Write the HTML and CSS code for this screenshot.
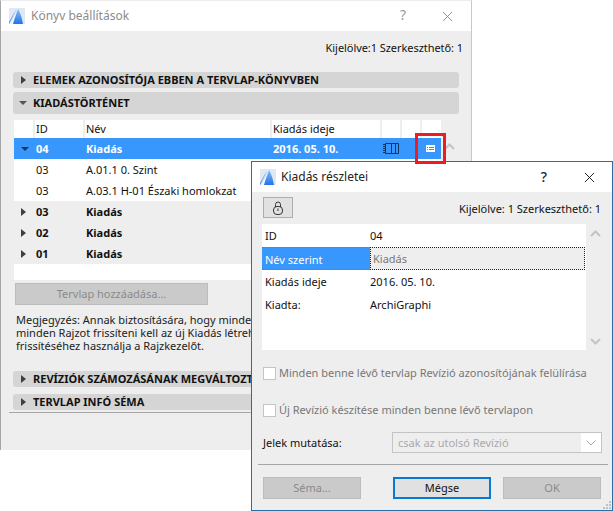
FILE: index.html
```html
<!DOCTYPE html>
<html lang="hu">
<head>
<meta charset="utf-8">
<title>Könyv beállítások</title>
<link rel="stylesheet" href="styles.css">
</head>
<body>
<section class="win back">
  <header class="titlebar back-title">
    <svg class="logo" viewBox="0 0 16 16"><defs><linearGradient id="arch" x1="0" y1="0" x2="0" y2="1"><stop offset="0" stop-color="#8fbcf2"/><stop offset="1" stop-color="#1f74ee"/></linearGradient></defs><rect width="16" height="16" fill="#dfe8f3"/><path d="M0 16C3 13 5 7 9 1c3 5 4 10 5 15z" fill="url(#arch)"/><path d="M0 16C3 13 5 7 9 1C7 6 5 12 4 16z" fill="#f4f8fd"/><path d="M0 14C2 11 4 6 7 2L6 4C4 8 2 12 0 16z" fill="#4c8ad8"/></svg>
    <span class="title-text">Könyv beállítások</span>
    <span class="help">?</span>
    <svg class="close" viewBox="0 0 12 12"><path d="M1 1l10 10M11 1L1 11" stroke="currentColor" fill="none"/></svg>
  </header>
  <div class="back-body">
    <p class="count back-count">Kijelölve:1 Szerkeszthető: 1</p>
    <div class="bar bar-first"><i class="tri-r"></i>ELEMEK AZONOSÍTÓJA EBBEN A TERVLAP-KÖNYVBEN</div>
    <div class="bar bar-open"><i class="tri-d"></i>KIADÁSTÖRTÉNET</div>
    <div class="table">
      <div class="row head"><span></span><span>ID</span><span>Név</span><span>Kiadás ideje</span><span></span><span></span><span></span></div>
      <div class="row sel bold"><span class="arrow"><i class="tri-d dark"></i></span><span>04</span><span>Kiadás</span><span>2016. 05. 10.</span>
        <span class="cell-icon"><svg class="book" width="16" height="11" viewBox="0 0 16 11"><path d="M2.500 .5h13v10h-13zM8.500 .5v10M12.500 .5v10M0 1.500h2.500M0 3.500h2.500M0 5.500h2.500M0 7.500h2.500M0 9.500h2.500" fill="none" stroke="#12365e"/></svg></span><span></span>
        <span class="cell-icon"><svg width="9" height="7" viewBox="0 0 9 7"><rect width="9" height="7" fill="#fff"/><path d="M1 2.500h1M3 2.500h5M1 4.500h1M3 4.500h5" stroke="#3a8ef0"/></svg></span></div>
      <div class="row"><span></span><span>03</span><span>A.01.1 0. Szint</span></div>
      <div class="row"><span></span><span>03</span><span>A.03.1 H-01 Északi homlokzat</span></div>
      <div class="row grey bold"><span class="arrow"><i class="tri-r"></i></span><span>03</span><span>Kiadás</span></div>
      <div class="row grey bold"><span class="arrow"><i class="tri-r"></i></span><span>02</span><span>Kiadás</span></div>
      <div class="row grey bold"><span class="arrow"><i class="tri-r"></i></span><span>01</span><span>Kiadás</span></div>
      <div class="table-rest"></div>
      <svg class="chev chev-table" viewBox="0 0 11 7"><path d="M1 6l4.500-4.500L10 6" fill="none" stroke="#c4c4c4" stroke-width="2"/></svg>
    </div>
    <button class="btn add" type="button">Tervlap hozzáadása...</button>
    <p class="note">Megjegyzés: Annak biztosítására, hogy minden<br>minden Rajzot frissíteni kell az új Kiadás létreh<br>frissítéséhez használja a Rajzkezelőt.</p>
    <div class="bar bar-rev"><i class="tri-r"></i>REVÍZIÓK SZÁMOZÁSÁNAK MEGVÁLTOZTATÁSA</div>
    <div class="bar bar-info"><i class="tri-r"></i>TERVLAP INFÓ SÉMA</div>
    <hr class="back-rule">
  </div>
</section>

<section class="win front">
  <header class="titlebar front-title">
    <svg class="logo" viewBox="0 0 16 16"><rect width="16" height="16" fill="#dfe8f3"/><path d="M0 16C3 13 5 7 9 1c3 5 4 10 5 15z" fill="url(#arch)"/><path d="M0 16C3 13 5 7 9 1C7 6 5 12 4 16z" fill="#f4f8fd"/><path d="M0 14C2 11 4 6 7 2L6 4C4 8 2 12 0 16z" fill="#4c8ad8"/></svg>
    <span class="title-text">Kiadás részletei</span>
    <span class="help">?</span>
    <svg class="close" viewBox="0 0 12 12"><path d="M1 1l10 10M11 1L1 11" stroke="currentColor" fill="none"/></svg>
  </header>
  <div class="front-body">
    <div class="toolrow">
      <button class="lock" type="button"><svg width="10" height="14" viewBox="0 0 10 14"><path d="M2.500 6V3.500a2.500 2.500 0 0 1 5 0V6" fill="none" stroke="#333"/><rect x=".5" y="5.500" width="9" height="8" rx="3.500" fill="none" stroke="#333"/><path d="M5 7.500v2.500" stroke="#333"/></svg></button>
      <span class="count">Kijelölve: 1 Szerkeszthető: 1</span>
    </div>
    <div class="props">
      <div class="prop"><span>ID</span><span>04</span></div>
      <div class="prop active"><span class="prop-key">Név szerint</span><span class="prop-val">Kiadás</span></div>
      <div class="prop"><span>Kiadás ideje</span><span>2016. 05. 10.</span></div>
      <div class="prop"><span>Kiadta:</span><span>ArchiGraphi</span></div>
      <svg class="chev chev-up" viewBox="0 0 11 7"><path d="M1 6l4.500-4.500L10 6" fill="none" stroke="#c4c4c4" stroke-width="2"/></svg>
      <svg class="chev chev-down" viewBox="0 0 11 7"><path d="M1 1l4.500 4.500L10 1" fill="none" stroke="#c4c4c4" stroke-width="2"/></svg>
    </div>
    <label class="check check-one"><i class="box"></i>Minden benne lévő tervlap Revízió azonosítójának felülírása</label>
    <label class="check check-two"><i class="box"></i>Új Revízió készítése minden benne lévő tervlapon</label>
    <div class="markers">
      <span class="markers-label">Jelek mutatása:</span>
      <div class="select"><span class="select-text">csak az utolsó Revízió</span><svg width="10" height="6" viewBox="0 0 10 6"><path d="M.5 .5l4.500 4.500 4.500-4.500" fill="none" stroke="#a8a8a8"/></svg></div>
    </div>
    <hr class="front-rule">
    <div class="actions">
      <button class="btn act" type="button">Séma...</button>
      <button class="btn act primary" type="button">Mégse</button>
      <button class="btn act" type="button">OK</button>
    </div>
    <svg class="grip" width="10" height="10" viewBox="0 0 10 10"><path d="M7 1h2v2H7zM4 4h2v2H4zM7 4h2v2H7zM1 7h2v2H1zM4 7h2v2H4zM7 7h2v2H7z" fill="#c0c0c0"/></svg>
  </div>
</section>

<div class="callout"></div>
</body>
</html>
```
FILE: styles.css
```css
* { box-sizing: border-box; }
html, body { margin: 0; height: 100%; }
body { position: relative; width: 613px; height: 511px; overflow: hidden; background: #fff; font: 12px/16px "Noto Sans", sans-serif; color: #111; }
p { margin: 0; }
hr { border: 0; margin: 0; }
i { display: block; font-style: normal; }

.win { position: absolute; display: flex; flex-direction: column; background: #eee; }
.back { left: 0; top: 0; width: 472px; height: 450px; border-left: 1px solid #a6a6a6; border-right: 1px solid #c8c8c8; border-top: 1px solid #ececec; }
.front { left: 251px; top: 161px; width: 362px; height: 350px; border: 1px solid #2a6ea3; }

.titlebar { display: flex; align-items: center; background: #fff; flex: none; }
.back-title { height: 30px; padding: 0 0 0 8px; color: #8c8c8c; }
.back-title .logo { margin-top: 0; }
.front-title { height: 30px; padding: 0 0 0 8px; color: #222; }
.logo { width: 16px; height: 16px; flex: none; }
.title-text { margin-left: 6px; font-size: 12px; flex: 1; }
.front-title .title-text { margin-left: 5px; }
.help { font-size: 14px; width: 14px; text-align: center; }
.close { width: 11px; height: 11px; margin: 0 17px 0 33px; }
.back-title .help { color: #9a9a9a; line-height: 14px; margin-bottom: 2px; }
.back-title .close { color: #8c8c8c; margin-left: 32px; margin-right: 18px; }
.front-title .help { font-weight: 500; }
.front-title .close { color: #111; margin-right: 17px; }

.back-body { position: relative; flex: 1; padding: 9px 0 0 12px; font-size: 11px; }
.count { font-size: 11px; white-space: nowrap; }
.back-count { text-align: right; padding-right: 8px; letter-spacing: -.06px; }

.bar { display: flex; align-items: center; width: 446px; background: #d5d5d5; border-radius: 3px; font-weight: 700; font-size: 11px; white-space: nowrap; padding-left: 8px; overflow: hidden; }
.bar i { margin-right: 7px; }
.bar-first { height: 16px; margin-top: 16px; }
.bar-open { height: 22px; margin-top: 4px; padding-left: 6px; }
.bar-open .tri-d { margin-right: 6px; }
.bar-rev { height: 16px; margin-top: 19px; }
.bar-info { height: 16px; margin-top: 7px; }
.back-rule { width: 460px; height: 1px; margin: 2px 0 0 -4px; background: #a6a6a6; }

.tri-r { width: 0; height: 0; border-style: solid; border-width: 4px 0 4px 5px; border-color: transparent transparent transparent #3f3f3f; }
.tri-d { width: 0; height: 0; border-style: solid; border-width: 4px 4px 0; border-color: #555 transparent transparent; }
.tri-d.dark { border-top-color: #14395f; }

.table { position: relative; width: 445px; margin: 6px 0 0 1px; font-size: 11px; }
.row { display: grid; grid-template-columns: 19px 50px 187px 110px 20px 20px 21px; align-items: center; height: 21px; width: 427px; background: #fff; white-space: nowrap; }
.row > span { padding-left: 3px; }
.row.head { height: 18px; }
.row.head > span { border-left: 2px solid #eee; height: 18px; line-height: 18px; padding-left: 1px; }
.row.head > span:first-child { border-left: 0; }
.row > .arrow { padding-left: 7px; }
.row.sel { background: #3897fd; color: #fff; }
.row.grey { background: #eee; }
.bold { font-weight: 700; }
.row > .cell-icon { display: flex; justify-content: center; padding: 0; }
.row > .cell-icon .book { margin-left: 2px; }
.table-rest { width: 427px; height: 16px; background: #fff; }
.chev { position: absolute; width: 11px; height: 7px; }
.chev-table { left: 430px; top: 23px; }

.btn { display: block; font: inherit; background: #cacaca; border: 1px solid #bcbcbc; color: #8a8a8a; padding: 0; }
.add { width: 193px; height: 22px; margin: 3px 0 0 2px; }
.note { margin: 8px 0 0 3px; line-height: 13px; white-space: nowrap; color: #222; }

.front-body { position: relative; flex: 1; padding: 5px 0 0 11px; font-size: 11px; }
.toolrow { display: flex; align-items: center; justify-content: space-between; padding-right: 11px; height: 21px; }
.lock { width: 30px; height: 21px; padding: 0; background: #e1e1e1; border: 1px solid #adadad; display: flex; align-items: center; justify-content: center; }
.toolrow .count { padding-top: 2px; }
.props { position: relative; width: 324px; height: 126px; margin: 6px 0 0 -1px; background: #fff; }
.prop { display: grid; grid-template-columns: 105px 218px; height: 23px; align-items: center; padding: 1px 0 0 3px; white-space: nowrap; color: #111; }
.prop.active { padding: 0; grid-template-columns: 108px 215px; }
.prop-key { background: #3897fd; color: #fff; height: 23px; line-height: 23px; padding-left: 3px; border-top: 1px dotted #a66; border-bottom: 1px dotted #a66; }
.prop-val { background: #eee; color: #777; height: 23px; line-height: 21px; padding-left: 2px; border: 1px dotted #222; }
.chev-up { left: 328px; top: 6px; }
.chev-down { left: 328px; top: 114px; }

.check { display: flex; align-items: center; color: #777; white-space: nowrap; }
.check-one { margin-top: 15px; height: 16px; }
.check-two { margin-top: 21px; height: 16px; }
.box { width: 13px; height: 13px; background: #fff; border: 1px solid #c4c4c4; margin-right: 3px; }
.markers { display: flex; align-items: center; height: 21px; margin-top: 14px; }
.markers-label { width: 129px; color: #111; }
.select { display: flex; align-items: center; justify-content: space-between; width: 210px; height: 21px; background: #fff; border: 1px solid #c4c4c4; padding-right: 5px; color: #aaa; }
.select-text { flex: 1; height: 19px; line-height: 19px; padding-left: 5px; background: #eee; margin-right: 5px; }
.front-rule { width: 350px; height: 1px; margin: 11px 0 0 -5px; background: #a6a6a6; }
.actions { display: flex; margin-top: 12px; }
.act { width: 98px; height: 22px; }
.actions .act:nth-child(2) { margin: 0 12px 0 32px; }
.primary { background: #e1e1e1; border: 2px solid #0a78d2; color: #111; }
.grip { position: absolute; right: 0; bottom: 0; }

.callout { position: absolute; left: 415px; top: 133px; width: 31px; height: 31px; border: 3px solid #ed1c24; }
```
